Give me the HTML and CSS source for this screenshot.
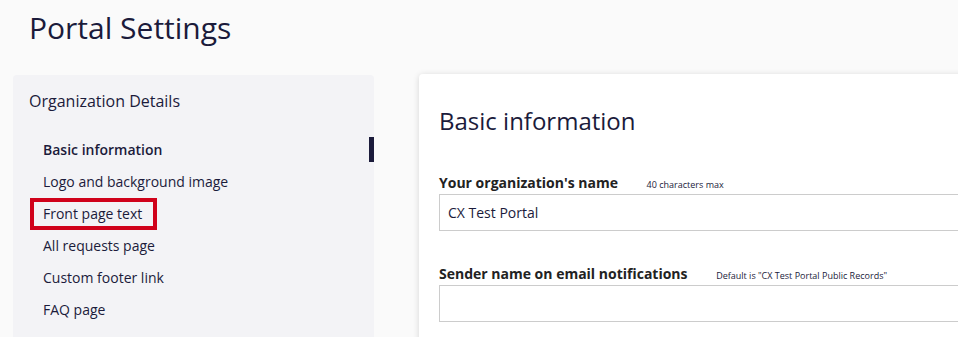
FILE: index.html
```html
<!DOCTYPE html>
<html lang="en">
<head>
    <meta charset="UTF-8">
    <meta name="viewport" content="width=device-width, initial-scale=1.0">
    <title>Portal Settings</title>
    <link rel="stylesheet" href="styles.css">
</head>
<body>
    <h1 class="title">Portal Settings</h1>
    <div class="page">
        <div class="sidebar">
            <h3>Organization Details</h3>
            <ul class="nav">
                <li class="active"><a href="javascript:;">Basic information</a></li>
                <li><a href="javascript:;">Logo and background image</a></li>
                <li class="mark"><a href="javascript:;">Front page text</a></li>
                <li><a href="javascript:;">All requests page</a></li>
                <li><a href="javascript:;">Custom footer link</a></li>
                <li><a href="javascript:;">FAQ page</a></li>
            </ul>
        </div>
        <div class="card">
            <h2>Basic information</h2>
            <div class="field">
                <label>Your organization's name <small>40 characters max</small></label>
                <input type="text" class="box" value="CX Test Portal">
            </div>
            <div class="field">
                <label>Sender name on email notifications <small>Default is "CX Test Portal Public Records"</small></label>
                <input type="text" class="box">
            </div>
        </div>
    </div>
</body>
</html>
```

FILE: styles.css
```css
body {
    margin: 0;
    padding: 0;
    background-color: #fafafa;
    font-family: "Open Sans", "Liberation Sans", sans-serif;
    color: #1b1b3b;
    overflow: hidden;
}
.title {
    margin: 8px 0 0 29px;
    font-size: 30px;
    line-height: 40px;
    font-weight: 400;
}
.page {
    display: flex;
    align-items: flex-start;
    margin-top: 26px;
    padding-left: 13px;
}
.sidebar {
    width: 361px;
    height: 300px;
    flex-shrink: 0;
    margin-top: 1px;
    background-color: #f3f3f6;
    border-radius: 4px;
}
.sidebar h3 {
    margin: 0;
    padding: 14px 0 0 16px;
    font-size: 16px;
    line-height: 24px;
    font-weight: 500;
}
.nav {
    margin: 21px 0 0;
    padding: 0;
}
.nav li {
    list-style: none;
    position: relative;
    height: 32px;
    display: flex;
    align-items: center;
    padding-left: 21px;
}
.nav li a {
    display: inline-block;
    padding: 0 11px 0 9px;
    line-height: 24px;
    font-size: 14px;
    color: #1b1b3b;
    text-decoration: none;
}
.nav li.active a {
    font-weight: 600;
}
.nav li.active::after {
    content: "";
    position: absolute;
    right: 0;
    top: 3px;
    width: 5px;
    height: 25px;
    background-color: #1b1b3b;
}
.nav li.mark a {
    outline: 4px solid #d0021b;
}
.card {
    width: 620px;
    flex-shrink: 0;
    margin-left: 45px;
    height: 300px;
    padding: 31px 20px 0;
    background-color: #fff;
    border-radius: 4px;
    box-shadow: 0 1px 6px rgba(0, 0, 0, 0.15);
}
.card h2 {
    margin: 0 0 36px;
    font-size: 24px;
    line-height: 32px;
    font-weight: 400;
}
.field {
    margin-bottom: 33px;
}
.field label {
    display: block;
    font-size: 14px;
    line-height: 20px;
    font-weight: 700;
    color: #222;
    margin-bottom: -1px;
}
.field label small {
    margin-left: 25px;
    font-size: 9px;
    font-weight: 400;
    color: #1b1b3b;
}
.box {
    display: block;
    box-sizing: border-box;
    width: 100%;
    height: 37px;
    padding: 0 8px;
    border: 1px solid #ccc;
    font-family: "Open Sans", "Liberation Sans", sans-serif;
    font-size: 14px;
    color: #1b1b3b;
    background-color: #fff;
}
```
